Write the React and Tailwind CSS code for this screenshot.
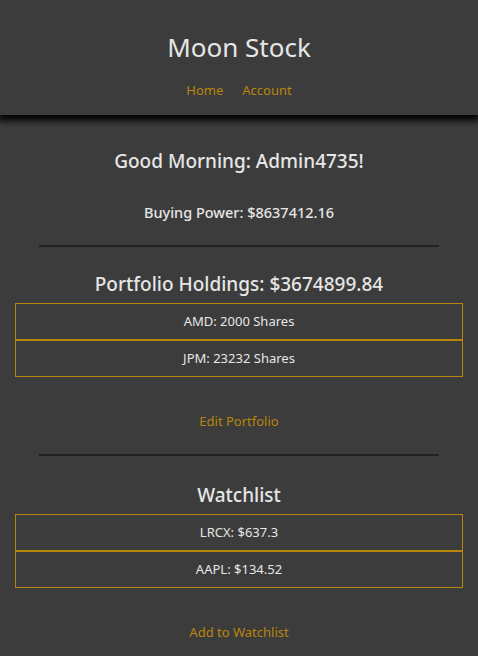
export default function App() {
  const holdings = [
    { sym: "AMD", shares: 2000 },
    { sym: "JPM", shares: 23232 },
  ];
  const watch = [
    { sym: "LRCX", price: "637.3" },
    { sym: "AAPL", price: "134.52" },
  ];
  return (
    <div className="min-h-[656px] bg-[#3c3c3c] text-[#e6e6e6]" style={{ fontFamily: "'Noto Sans', 'Open Sans', sans-serif" }}>
      <header className="relative z-10 flex h-[115px] flex-col items-center bg-[#3c3c3c] shadow-[0_4px_6px_2px_rgba(0,0,0,0.9)]">
        <h1 className="mt-[28px] text-[26px] leading-[38px]">Moon Stock</h1>
        <nav className="mt-[15px] flex gap-[19px] text-[13px] leading-[18px] text-[#b8860b]">
          <a>Home</a>
          <a>Account</a>
        </nav>
      </header>

      <main className="flex flex-col items-center pb-4">
        <h2 className="mt-[33px] text-[19px] font-medium leading-[26px]">Good Morning: Admin4735!</h2>
        <p className="mt-[28px] text-[14.5px] font-medium leading-[20px]">Buying Power: $8637412.16</p>
        <hr className="mt-[23px] w-[400px] border-t-2 border-[#222]" />

        <h2 className="mt-[24px] text-[19px] font-medium leading-[26px]">Portfolio Holdings: $3674899.84</h2>
        <ul className="mt-[6px] w-[448px]">
          {holdings.map((h) => (
            <li key={h.sym} className="border border-[#b8860b] py-[8px] text-center text-[13px] leading-[19px]">
              {h.sym}: {h.shares} Shares
            </li>
          ))}
        </ul>
        <a className="mt-[35px] text-[13px] leading-[18px] text-[#b8860b]">Edit Portfolio</a>
        <hr className="mt-[24px] w-[400px] border-t-2 border-[#222]" />

        <h2 className="mt-[26px] text-[19px] font-medium leading-[26px]">Watchlist</h2>
        <ul className="mt-[6px] w-[448px]">
          {watch.map((w) => (
            <li key={w.sym} className="border border-[#b8860b] py-[8px] text-center text-[13px] leading-[19px]">
              {w.sym}: ${w.price}
            </li>
          ))}
        </ul>
        <a className="mt-[35px] text-[13px] leading-[18px] text-[#b8860b]">Add to Watchlist</a>
      </main>
    </div>
  );
}
